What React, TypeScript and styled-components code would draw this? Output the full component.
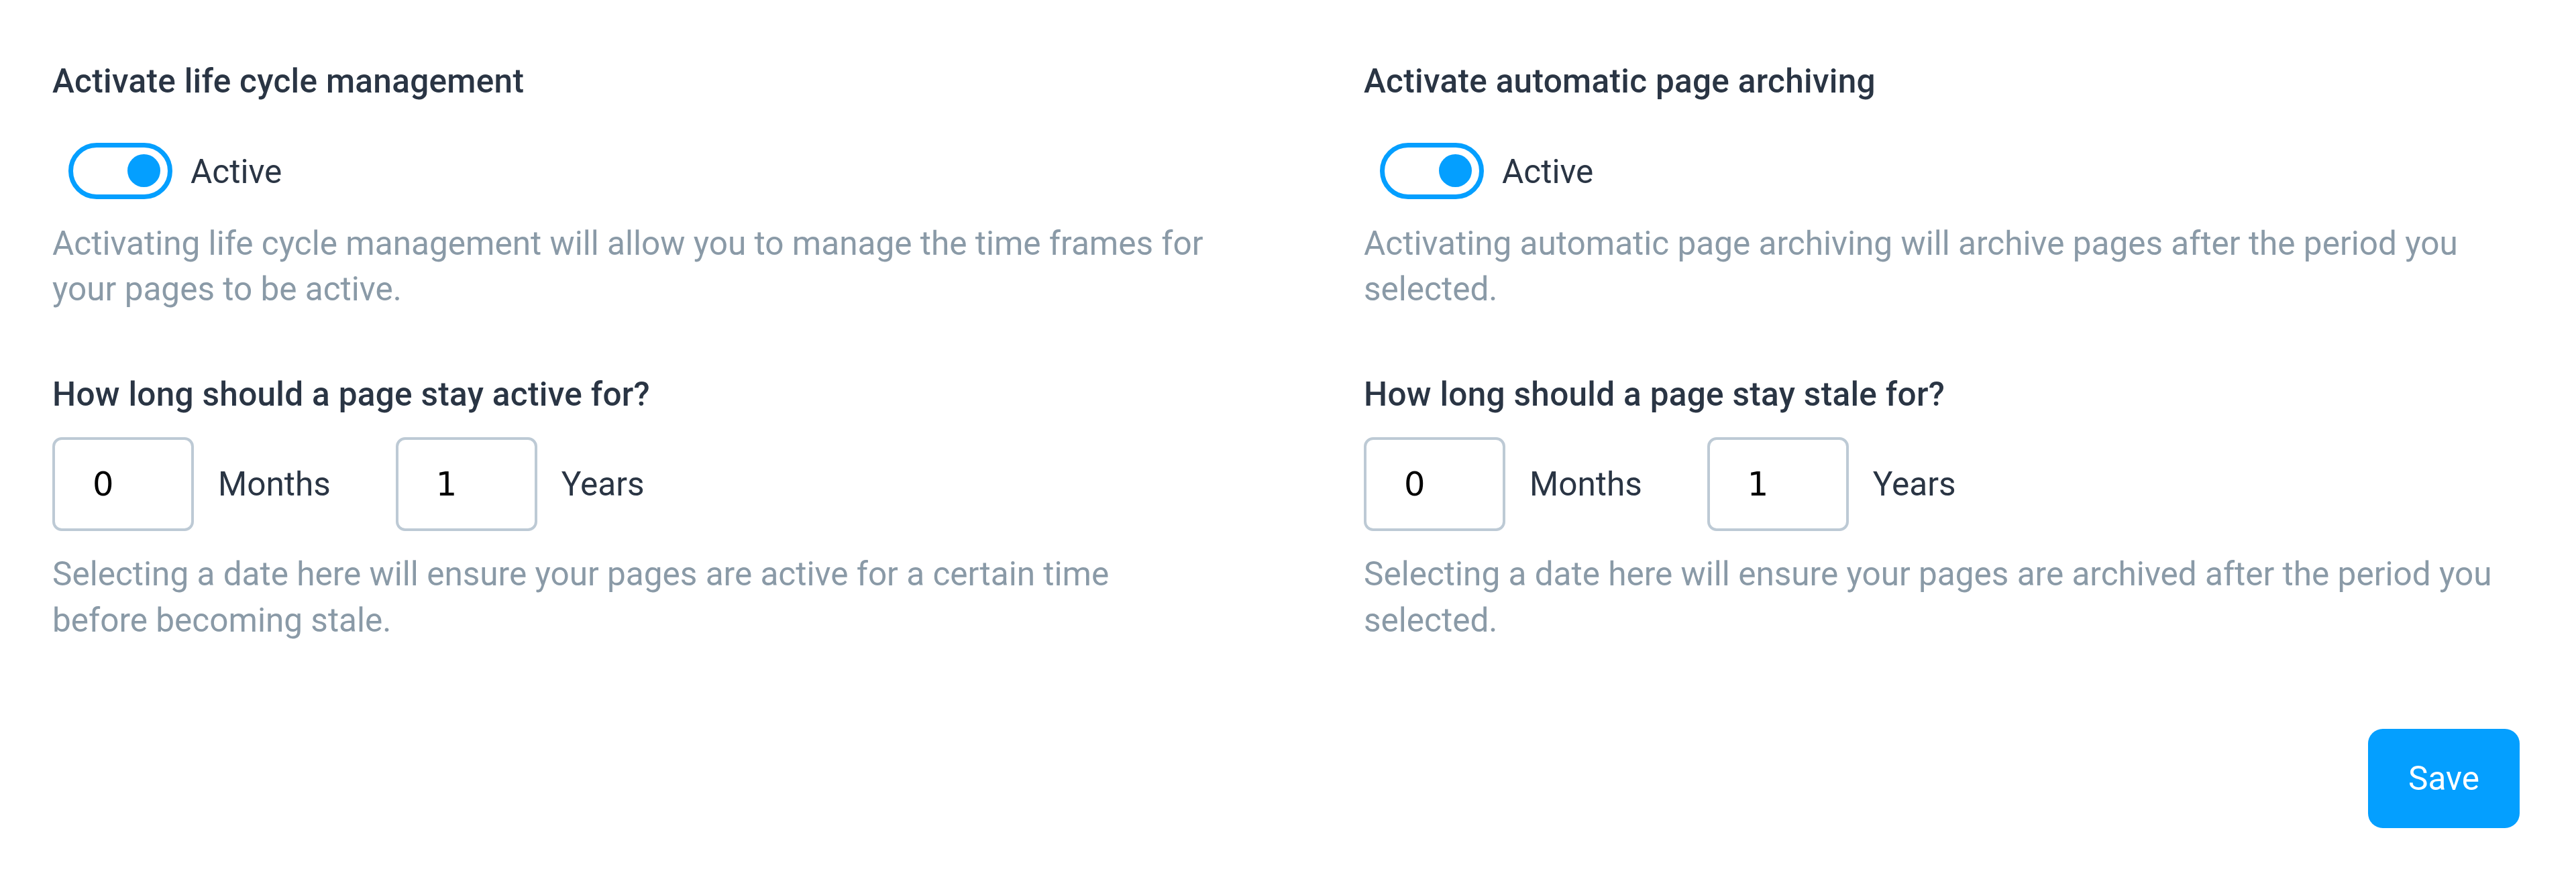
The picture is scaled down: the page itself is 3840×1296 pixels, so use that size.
import React, { useState } from "react";
import styled, { createGlobalStyle } from "styled-components";

const GlobalStyle = createGlobalStyle`
  body {
    margin: 0;
    background: #ffffff;
    font-family: Roboto, "Liberation Sans", sans-serif;
    -webkit-font-smoothing: antialiased;
  }
`;

const colors = {
  ink: "#2a3544",
  muted: "#8a9aa7",
  blue: "#049fff",
  border: "#bdcad5",
};

const Page = styled.main`
  padding: 87px 84px 0 78px;
  font-size: 49.5px;
  line-height: 68.6px;
  color: ${colors.ink};
`;

const Columns = styled.div`
  display: grid;
  grid-template-columns: 1729px 1729px;
  column-gap: 226px;
`;

const Section = styled.section`
  display: flex;
  flex-direction: column;
  align-items: flex-start;
`;

const Title = styled.h2`
  margin: 0;
  font-size: inherit;
  line-height: inherit;
  font-weight: 500;
  letter-spacing: 0.3px;
  color: ${colors.ink};
`;

const Question = styled(Title)`
  margin-top: 88px;
`;

const ToggleRow = styled.div`
  display: flex;
  align-items: center;
  gap: 27px;
  margin: 57px 0 0 24px;
`;

const Track = styled.button<{ $on: boolean }>`
  box-sizing: border-box;
  position: relative;
  width: 155px;
  height: 84px;
  padding: 0;
  border: 7px solid ${({ $on }) => ($on ? colors.blue : colors.border)};
  border-radius: 42px;
  background: #ffffff;
  cursor: pointer;
`;

const Knob = styled.span<{ $on: boolean }>`
  position: absolute;
  top: 10.5px;
  left: ${({ $on }) => ($on ? "81px" : "11px")};
  width: 49px;
  height: 49px;
  border-radius: 50%;
  background: ${({ $on }) => ($on ? colors.blue : colors.border)};
`;

const ToggleLabel = styled.span`
  margin-top: 4px;
  color: ${colors.ink};
`;

const Hint = styled.p`
  margin: 32px 0 0;
  color: ${colors.muted};
`;

const HelperHint = styled(Hint)`
  margin-top: 30px;
`;

const DurationRow = styled.div`
  display: flex;
  align-items: center;
  margin-top: 30px;
`;

const DurationGroup = styled.label`
  display: flex;
  align-items: center;
  gap: 36px;
  margin-right: 97px;
`;

const NumberField = styled.input`
  box-sizing: border-box;
  width: 211px;
  height: 140px;
  padding: 0 0 0 56px;
  border: 4.5px solid ${colors.border};
  border-radius: 14px;
  background: #ffffff;
  font-family: "DejaVu Sans", sans-serif;
  font-size: 49.5px;
  color: #000000;
  outline: none;
`;

const Unit = styled.span`
  color: ${colors.ink};
`;

const Footer = styled.div`
  display: flex;
  justify-content: flex-end;
  margin-top: 127px;
`;

const SaveButton = styled.button`
  width: 226px;
  height: 148px;
  border: none;
  border-radius: 22px;
  background: ${colors.blue};
  color: #ffffff;
  font-family: inherit;
  font-size: 49.5px;
  font-weight: 400;
  cursor: pointer;
`;

type Setting = {
  title: string;
  description: string;
  question: string;
  months: string;
  years: string;
  helper: string;
};

const settings: Setting[] = [
  {
    title: "Activate life cycle management",
    description:
      "Activating life cycle management will allow you to manage the time frames for your pages to be active.",
    question: "How long should a page stay active for?",
    months: "0",
    years: "1",
    helper:
      "Selecting a date here will ensure your pages are active for a certain time before becoming stale.",
  },
  {
    title: "Activate automatic page archiving",
    description:
      "Activating automatic page archiving will archive pages after the period you selected.",
    question: "How long should a page stay stale for?",
    months: "0",
    years: "1",
    helper:
      "Selecting a date here will ensure your pages are archived after the period you selected.",
  },
];

const SettingSection = ({ setting }: { setting: Setting }) => {
  const [on, setOn] = useState(true);
  return (
    <Section>
      <Title>{setting.title}</Title>
      <ToggleRow>
        <Track
          type="button"
          role="switch"
          aria-checked={on}
          $on={on}
          onClick={() => setOn(!on)}
        >
          <Knob $on={on} />
        </Track>
        <ToggleLabel>{on ? "Active" : "Inactive"}</ToggleLabel>
      </ToggleRow>
      <Hint>{setting.description}</Hint>
      <Question>{setting.question}</Question>
      <DurationRow>
        <DurationGroup>
          <NumberField type="text" defaultValue={setting.months} />
          <Unit>Months</Unit>
        </DurationGroup>
        <DurationGroup>
          <NumberField type="text" defaultValue={setting.years} />
          <Unit>Years</Unit>
        </DurationGroup>
      </DurationRow>
      <HelperHint>{setting.helper}</HelperHint>
    </Section>
  );
};

export default function App() {
  return (
    <>
      <GlobalStyle />
      <Page>
        <Columns>
          {settings.map((s) => (
            <SettingSection key={s.title} setting={s} />
          ))}
        </Columns>
        <Footer>
          <SaveButton type="button">Save</SaveButton>
        </Footer>
      </Page>
    </>
  );
}
